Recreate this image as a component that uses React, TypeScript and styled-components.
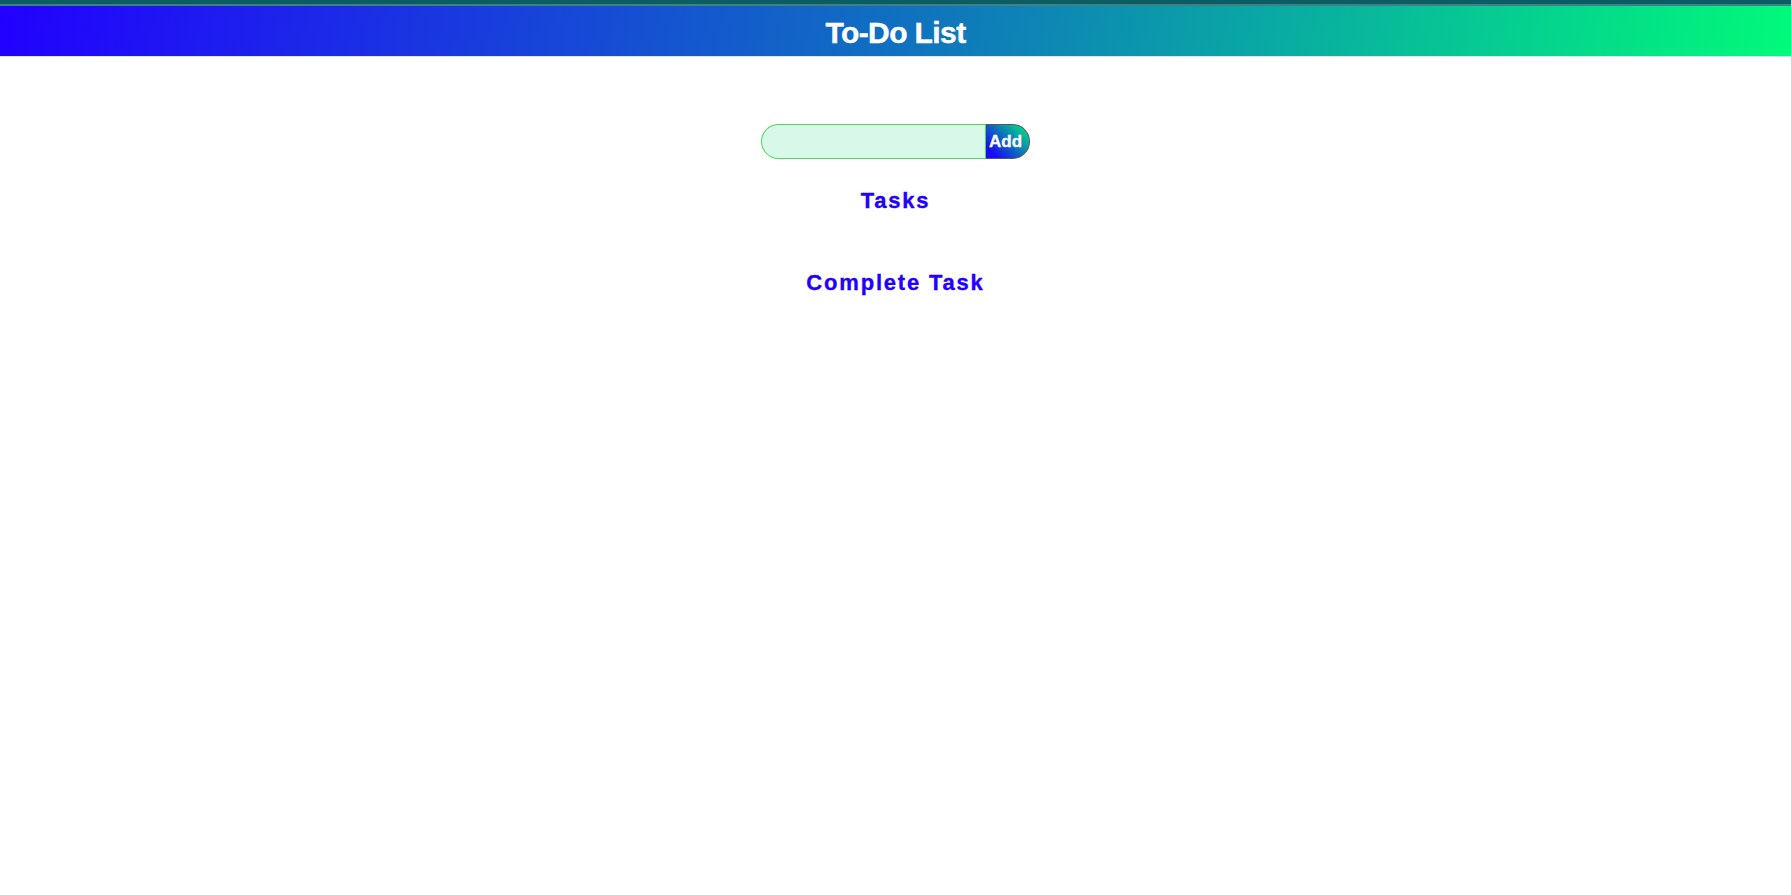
import React from "react";
import styled, { createGlobalStyle } from "styled-components";

const Global = createGlobalStyle`
  html, body { margin: 0; padding: 0; background: #ffffff; }
  body { font-family: "Liberation Sans", Arial, sans-serif; }
`;

const TopStrip = styled.div`
  height: 4px;
  background: #0a5d62;
  border-bottom: 2px solid #3f7f86;
`;

const Header = styled.header`
  height: 50px;
  background: linear-gradient(100deg, #2200ff 0%, #1070c0 50%, #00fa7a 100%);
  display: flex;
  align-items: center;
  justify-content: center;
  border-bottom: 1px solid #d8e4f8;
`;

const Title = styled.h1`
  margin: 0;
  color: #ffffff;
  font-family: "Liberation Sans", Arial, sans-serif;
  font-weight: 700;
  font-size: 30px;
  letter-spacing: -0.6px;
  line-height: 1;
  padding-top: 3px;
  -webkit-text-stroke: 0.4px #ffffff;
`;

const Main = styled.main`
  display: flex;
  flex-direction: column;
  align-items: center;
  padding-top: 67px;
`;

const Form = styled.form`
  display: flex;
  height: 35px;
`;

const Input = styled.input`
  box-sizing: border-box;
  width: 224px;
  height: 35px;
  border: 1px solid #4fdc55;
  border-right: none;
  border-radius: 18px 0 0 18px;
  background: #d8f8ea;
  outline: none;
  padding: 0 14px;
  font-size: 16px;
`;

const AddButton = styled.button`
  box-sizing: border-box;
  width: 45px;
  height: 35px;
  border: 1px solid #505860;
  border-left: 1px solid #4fdc55;
  border-radius: 0 18px 18px 0;
  background: linear-gradient(45deg, #1a0af5 15%, #0d78b8 55%, #00d68a 90%);
  color: #ffffff;
  font-family: "Liberation Sans", Arial, sans-serif;
  font-weight: 700;
  font-size: 17px;
  padding: 1px 4px 0 0;
  cursor: pointer;
  -webkit-text-stroke: 0.3px #ffffff;
`;

const SectionTitle = styled.h2<{ $gap: number }>`
  margin: ${(p) => p.$gap}px 0 0;
  color: #2200ff;
  font-family: "Liberation Sans", Arial, sans-serif;
  font-weight: 700;
  font-size: 22px;
  letter-spacing: 1.8px;
  line-height: 26px;
  -webkit-text-stroke: 0.35px #2200ff;
`;

const TaskList = styled.ul`
  list-style: none;
  margin: 0;
  padding: 0;
`;

export default function App() {
  return (
    <>
      <Global />
      <TopStrip />
      <Header>
        <Title>To-Do List</Title>
      </Header>
      <Main>
        <Form onSubmit={(e) => e.preventDefault()}>
          <Input type="text" />
          <AddButton type="submit">Add</AddButton>
        </Form>
        <SectionTitle $gap={29}>Tasks</SectionTitle>
        <TaskList />
        <SectionTitle $gap={56}>Complete Task</SectionTitle>
        <TaskList />
      </Main>
    </>
  );
}
